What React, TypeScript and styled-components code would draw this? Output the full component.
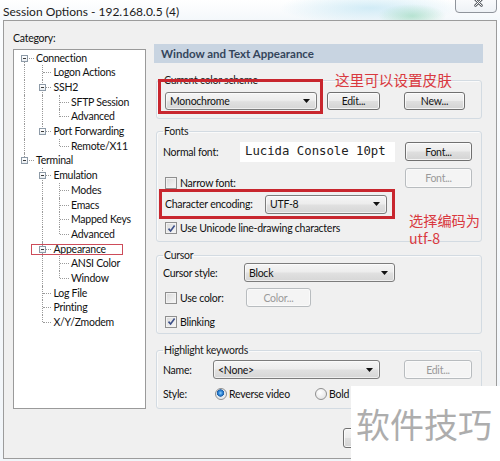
import React from 'react';
import styled, { createGlobalStyle } from 'styled-components';

const FONT = `Lato, "Liberation Sans", Arial, sans-serif`;
const CJK = `"Noto Sans CJK SC", "Noto Sans", sans-serif`;
const MONO = `"DejaVu Sans Mono", "Liberation Mono", monospace`;

const Global = createGlobalStyle`
  html, body { margin: 0; padding: 0; }
  body { background: #f6f9fc; font-family: ${FONT}; color: #111; }
`;

const Page = styled.div`
  position: relative;
  width: 500px;
  height: 461px;
  overflow: hidden;
  display: flex;
  flex-direction: column;
  letter-spacing: -0.25px;
  background: linear-gradient(180deg, #fbfdff 0%, #f1f5f9 100%);
`;

const TitleBar = styled.div`
  position: relative;
  flex: none;
  height: 20px;
  background:
    radial-gradient(ellipse 34px 12px at 412px 16px, rgba(120, 205, 160, 0.45), rgba(120, 205, 160, 0) 100%),
    radial-gradient(ellipse 90px 16px at 370px 8px, rgba(175, 222, 240, 0.55), rgba(175, 222, 240, 0) 100%),
    linear-gradient(180deg, #ffffff 0%, #f4f8fb 100%);
`;

const Title = styled.div`
  padding: 4px 0 0 3px;
  font-size: 12px;
  line-height: 16px;
  letter-spacing: 0;
  color: #1b1b1b;
  white-space: nowrap;
`;

const CloseButton = styled.div`
  position: absolute;
  top: -8px;
  right: 3px;
  box-sizing: border-box;
  width: 42px;
  height: 21px;
  border: 1px solid #8f949b;
  border-radius: 0 0 4px 4px;
  background: linear-gradient(180deg, #ffffff 0%, #eef2f6 100%);
  display: flex;
  align-items: flex-end;
  justify-content: center;
  padding-bottom: 5px;
  padding-left: 5px;
`;

const Frame = styled.div`
  box-sizing: border-box;
  flex: none;
  width: 494px;
  height: 439px;
  margin-left: 3px;
  border: 1px solid #9c9c9c;
  background: #f0f0f0;
  display: flex;
  flex-direction: column;
`;

const Body = styled.div`
  display: flex;
  height: 388px;
`;

const LeftCol = styled.div`
  flex: none;
  padding: 10.5px 0 0 9px;
  display: flex;
  flex-direction: column;
`;

const CategoryLabel = styled.div`
  font-size: 10.5px;
  line-height: 13px;
  height: 13px;
  margin-bottom: 4.5px;
`;

const Tree = styled.div`
  box-sizing: border-box;
  width: 133px;
  height: 360px;
  border: 1px solid #9a9a9a;
  background: #ffffff;
  padding: 0.65px 0 0 2.25px;
`;

const TreeRow = styled.div`
  position: relative;
  display: flex;
  height: 14.7px;
`;

type Link = 'none' | 'pass' | 'tee' | 'end' | 'start';

const Cell = styled.div<{ $link: Link }>`
  position: relative;
  flex: none;
  width: 17.5px;
  height: 100%;
  &::before {
    content: '';
    display: ${p => (p.$link === 'none' ? 'none' : 'block')};
    position: absolute;
    left: 8px;
    top: ${p => (p.$link === 'start' ? '50%' : '0')};
    bottom: ${p => (p.$link === 'end' ? '50%' : '0')};
    border-left: 1px dotted #9a9a9a;
  }
  &::after {
    content: '';
    display: ${p => (p.$link === 'none' || p.$link === 'pass' ? 'none' : 'block')};
    position: absolute;
    left: 9px;
    right: 0;
    top: 7px;
    border-top: 1px dotted #9a9a9a;
  }
`;

const Expander = styled.span`
  position: absolute;
  left: 5px;
  top: 4px;
  z-index: 1;
  box-sizing: border-box;
  width: 7px;
  height: 7px;
  border: 1px solid #8d9aa7;
  background: linear-gradient(180deg, #ffffff 0%, #e9edf1 100%);
  &::after {
    content: '';
    position: absolute;
    left: 1px;
    right: 1px;
    top: 2px;
    height: 1px;
    background: #3b3b3b;
  }
`;

const TreeLabel = styled.span`
  padding-left: 2.25px;
  font-size: 10.5px;
  line-height: 14.7px;
  white-space: nowrap;
  color: #111;
`;

const TreeMark = styled.span`
  position: absolute;
  left: 14.75px;
  top: 2.25px;
  width: 92px;
  height: 11px;
  box-sizing: border-box;
  border: 1.5px solid #cd4c5a;
`;

const RightCol = styled.div`
  position: relative;
  flex: none;
  width: 329px;
  margin: 23px 0 0 8px;
  display: flex;
  flex-direction: column;
`;

const Header = styled.div`
  height: 19px;
  padding-left: 7px;
  background: #c8d4e1;
  font-size: 11.5px;
  font-weight: 700;
  line-height: 19px;
  letter-spacing: 0;
  color: #34455b;
  white-space: nowrap;
`;

const Group = styled.fieldset<{ $top: number; $bottom: number }>`
  margin: ${p => p.$top}px 1px 0 2px;
  padding: 0 6px ${p => p.$bottom}px 6px;
  border: 1px solid #d3dbe2;
  border-radius: 3px;
  box-shadow: inset 1px 1px 0 #fafafa;
  min-width: 0;
`;

const Legend = styled.legend`
  padding: 0 1px;
  font-size: 10.5px;
  line-height: 13px;
  color: #1a1a1a;
  white-space: nowrap;
`;

const Row = styled.div<{ $mt: number; $h: number }>`
  display: flex;
  align-items: center;
  margin-top: ${p => p.$mt}px;
  height: ${p => p.$h}px;
`;

const FieldLabel = styled.span<{ $w: number }>`
  flex: none;
  width: ${p => p.$w}px;
  font-size: 10.5px;
  white-space: nowrap;
`;

const Combo = styled.div<{ $w: number; $h?: number; $ml?: number }>`
  box-sizing: border-box;
  flex: none;
  width: ${p => p.$w}px;
  height: ${p => p.$h ?? 19}px;
  margin-left: ${p => p.$ml ?? 0}px;
  border: 1px solid #7c7c7c;
  border-radius: 3px;
  background: linear-gradient(180deg, #f5f5f5 0%, #ededed 45%, #e0e0e0 55%, #d6d6d6 100%);
  box-shadow: inset 0 0 0 1px rgba(255, 255, 255, 0.6);
  display: flex;
  align-items: center;
  padding: 0 6px 0 4px;
  font-size: 10.5px;
  white-space: nowrap;
`;

const ComboText = styled.span`
  flex: 1;
`;

const Button = styled.div<{ $w: number; $h?: number; $ml?: number; $disabled?: boolean }>`
  box-sizing: border-box;
  flex: none;
  width: ${p => p.$w}px;
  height: ${p => p.$h ?? 19}px;
  margin-left: ${p => p.$ml ?? 0}px;
  border: 1px solid ${p => (p.$disabled ? '#b8bcbf' : '#707070')};
  border-radius: 3px;
  background: ${p =>
    p.$disabled
      ? '#f4f4f4'
      : 'linear-gradient(180deg, #f4f4f4 0%, #ececec 48%, #dfdfdf 52%, #d3d3d3 100%)'};
  box-shadow: inset 0 0 0 1px ${p => (p.$disabled ? '#fafafa' : 'rgba(255,255,255,0.75)')};
  color: ${p => (p.$disabled ? '#9a9a9a' : '#151515')};
  font-size: 10.5px;
  display: flex;
  align-items: center;
  justify-content: center;
  white-space: nowrap;
`;

const FontPreview = styled.div`
  flex: none;
  width: 155px;
  height: 20px;
  background: #ffffff;
  padding-left: 5px;
  box-sizing: border-box;
  font-family: ${MONO};
  font-size: 12.3px;
  line-height: 19px;
  letter-spacing: 0;
  color: #222;
  white-space: nowrap;
`;

const Split = styled.div`
  display: flex;
`;

const Stack = styled.div`
  display: flex;
  flex-direction: column;
`;

const RightStack = styled(Stack)`
  margin-left: auto;
  margin-right: 3px;
  padding-top: 4.5px;
  gap: 7px;
`;

const Annotated = styled.div<{ $mt: number }>`
  display: flex;
  align-items: center;
  margin: ${p => p.$mt}px 0 0 -1px;
  width: 230px;
  height: 24px;
  padding-left: 3px;
  box-sizing: border-box;
  outline: 3px solid #c8262e;
`;

const Check = styled.span`
  display: flex;
  align-items: center;
  gap: 3px;
  margin-left: 2px;
  font-size: 10.5px;
  white-space: nowrap;
`;

const CheckBox = styled.span`
  box-sizing: border-box;
  flex: none;
  width: 12px;
  height: 12px;
  border: 1px solid #8f8f8f;
  background: linear-gradient(135deg, #d9d9d9 0%, #f8f8f8 100%);
  box-shadow: inset 0 0 0 1px #f2f2f2;
  display: flex;
  align-items: center;
  justify-content: center;
`;

const CheckCell = styled.div<{ $w: number }>`
  flex: none;
  width: ${p => p.$w}px;
  display: flex;
  align-items: center;
`;

const Radio = styled.span<{ $w?: number }>`
  flex: none;
  width: ${p => (p.$w ? `${p.$w}px` : 'auto')};
  display: flex;
  align-items: center;
  gap: 2px;
  margin-left: 2px;
  font-size: 10.5px;
  white-space: nowrap;
`;

const RadioDot = styled.span<{ $on?: boolean }>`
  box-sizing: border-box;
  flex: none;
  width: 12px;
  height: 12px;
  border-radius: 50%;
  border: 1px solid #8f8f8f;
  background: ${p =>
    p.$on
      ? 'radial-gradient(circle at 45% 40%, #8fd0ff 0, #2f86d6 2px, #1b5ea8 3.4px, #dfe6ec 3.9px, #f7f7f7 100%)'
      : 'radial-gradient(circle at 40% 35%, #ffffff 0, #dedede 100%)'};
`;

const ButtonRow = styled.div`
  display: flex;
  justify-content: flex-end;
  gap: 7px;
  margin-top: 19px;
  padding-right: 12px;
`;

const RedBox = styled.div`
  position: absolute;
  left: 4px;
  top: 35px;
  width: 165px;
  height: 35px;
  box-sizing: border-box;
  border: 3px solid #c8262e;
`;

const Note = styled.div<{ $x: number; $y: number; $size: number }>`
  position: absolute;
  left: ${p => p.$x}px;
  top: ${p => p.$y}px;
  font-family: ${CJK};
  font-size: ${p => p.$size}px;
  line-height: 16px;
  letter-spacing: 0;
  color: #d9393f;
  white-space: nowrap;
`;

const Watermark = styled.div`
  position: absolute;
  left: 351px;
  top: 386px;
  right: 0;
  bottom: 0;
  background: #ffffff;
  padding: 18px 0 0 5px;
  font-family: ${CJK};
  font-size: 34px;
  line-height: 40px;
  letter-spacing: 0;
  color: #adadad;
  white-space: nowrap;
`;

type Node = { label: string; children?: Node[]; marked?: boolean };

const TREE: Node[] = [
  {
    label: 'Connection',
    children: [
      { label: 'Logon Actions' },
      { label: 'SSH2', children: [{ label: 'SFTP Session' }, { label: 'Advanced' }] },
      { label: 'Port Forwarding', children: [{ label: 'Remote/X11' }] },
    ],
  },
  {
    label: 'Terminal',
    children: [
      {
        label: 'Emulation',
        children: [{ label: 'Modes' }, { label: 'Emacs' }, { label: 'Mapped Keys' }, { label: 'Advanced' }],
      },
      { label: 'Appearance', marked: true, children: [{ label: 'ANSI Color' }, { label: 'Window' }] },
      { label: 'Log File' },
      { label: 'Printing' },
      { label: 'X/Y/Zmodem' },
    ],
  },
];

type Flat = { node: Node; guides: boolean[]; link: Link };

function flatten(nodes: Node[], guides: boolean[], out: Flat[], root: boolean) {
  nodes.forEach((node, i) => {
    const hasNext = i < nodes.length - 1;
    const link: Link = root && i === 0 && hasNext ? 'start' : hasNext ? 'tee' : 'end';
    out.push({ node, guides, link });
    if (node.children) flatten(node.children, [...guides, hasNext], out, false);
  });
  return out;
}

const ROWS = flatten(TREE, [], [], true);

const Arrow = () => (
  <svg width="7" height="4" viewBox="0 0 7 4">
    <path d="M0 0 H7 L3.5 4 Z" fill="#111" />
  </svg>
);

const Tick = () => (
  <svg width="9" height="9" viewBox="0 0 9 9">
    <path d="M1.5 4.6 L3.6 7 L7.6 1.6" fill="none" stroke="#3d5089" strokeWidth="1.6" />
  </svg>
);

const CloseGlyph = () => (
  <svg width="9" height="9" viewBox="0 0 9 9">
    <path d="M1.5 1.5 L7.5 7.5 M7.5 1.5 L1.5 7.5" stroke="#5e6268" strokeWidth="2.6" strokeLinecap="round" />
    <path d="M1.5 1.5 L7.5 7.5 M7.5 1.5 L1.5 7.5" stroke="#ffffff" strokeWidth="1" strokeLinecap="round" />
  </svg>
);

const Dropdown = ({ w, h, ml, text }: { w: number; h?: number; ml?: number; text: string }) => (
  <Combo $w={w} $h={h} $ml={ml}>
    <ComboText>{text}</ComboText>
    <Arrow />
  </Combo>
);

const CheckItem = ({ label, checked }: { label: string; checked?: boolean }) => (
  <Check>
    <CheckBox>{checked && <Tick />}</CheckBox>
    {label}
  </Check>
);

export default function App() {
  return (
    <Page>
      <Global />
      <TitleBar>
        <Title>Session Options - 192.168.0.5 (4)</Title>
        <CloseButton>
          <CloseGlyph />
        </CloseButton>
      </TitleBar>
      <Frame>
        <Body>
          <LeftCol>
            <CategoryLabel>Category:</CategoryLabel>
            <Tree>
              {ROWS.map((r, i) => (
                <TreeRow key={i}>
                  {r.guides.map((g, j) => (
                    <Cell key={j} $link={g ? 'pass' : 'none'} />
                  ))}
                  <Cell $link={r.link}>{r.node.children && <Expander />}</Cell>
                  <TreeLabel>{r.node.label}</TreeLabel>
                  {r.node.marked && <TreeMark />}
                </TreeRow>
              ))}
            </Tree>
          </LeftCol>
          <RightCol>
            <Header>Window and Text Appearance</Header>
            <Group $top={10.5} $bottom={8}>
              <Legend>Current color scheme</Legend>
              <Row $mt={5.5} $h={18}>
                <Dropdown w={152} h={18} ml={2} text="Monochrome" />
                <Button $w={53} $ml={10} $h={18}>Edit...</Button>
                <Button $w={61} $ml={24} $h={18}>New...</Button>
              </Row>
            </Group>
            <Group $top={5.5} $bottom={7}>
              <Legend>Fonts</Legend>
              <Split>
                <Stack>
                  <Row $mt={4.5} $h={20}>
                    <FieldLabel $w={77}>Normal font:</FieldLabel>
                    <FontPreview>Lucida Console 10pt</FontPreview>
                  </Row>
                  <Row $mt={15} $h={12}>
                    <CheckItem label="Narrow font:" />
                  </Row>
                  <Annotated $mt={3}>
                    <FieldLabel $w={100}>Character encoding:</FieldLabel>
                    <Dropdown w={122} text="UTF-8" />
                  </Annotated>
                  <Row $mt={6} $h={12}>
                    <CheckItem label="Use Unicode line-drawing characters" checked />
                  </Row>
                </Stack>
                <RightStack>
                  <Button $w={67} $h={19}>Font...</Button>
                  <Button $w={67} $h={20} $disabled>Font...</Button>
                </RightStack>
              </Split>
            </Group>
            <Group $top={6.5} $bottom={5.5}>
              <Legend>Cursor</Legend>
              <Row $mt={1.5} $h={19}>
                <FieldLabel $w={81}>Cursor style:</FieldLabel>
                <Dropdown w={151} text="Block" />
              </Row>
              <Row $mt={6} $h={19}>
                <CheckCell $w={83}>
                  <CheckItem label="Use color:" />
                </CheckCell>
                <Button $w={65} $disabled>Color...</Button>
              </Row>
              <Row $mt={8.5} $h={12}>
                <CheckItem label="Blinking" checked />
              </Row>
            </Group>
            <Group $top={9.5} $bottom={7.5}>
              <Legend>Highlight keywords</Legend>
              <Row $mt={3.5} $h={19}>
                <FieldLabel $w={50}>Name:</FieldLabel>
                <Dropdown w={167} text="<None>" />
                <Button $w={68} $ml={24} $disabled>Edit...</Button>
              </Row>
              <Row $mt={8.5} $h={13}>
                <FieldLabel $w={50}>Style:</FieldLabel>
                <Radio $w={98}>
                  <RadioDot $on />
                  Reverse video
                </Radio>
                <Radio>
                  <RadioDot />
                  Bold
                </Radio>
              </Row>
            </Group>
            <RedBox />
            <Note $x={181} $y={27.5} $size={14.6}>这里可以设置皮肤</Note>
            <Note $x={255} $y={168} $size={14.2}>选择编码为</Note>
            <Note $x={255} $y={186} $size={14.2}>utf-8</Note>
          </RightCol>
        </Body>
        <ButtonRow>
          <Button $w={67} $h={20} />
          <Button $w={67} $h={20} />
        </ButtonRow>
      </Frame>
      <Watermark>软件技巧</Watermark>
    </Page>
  );
}
